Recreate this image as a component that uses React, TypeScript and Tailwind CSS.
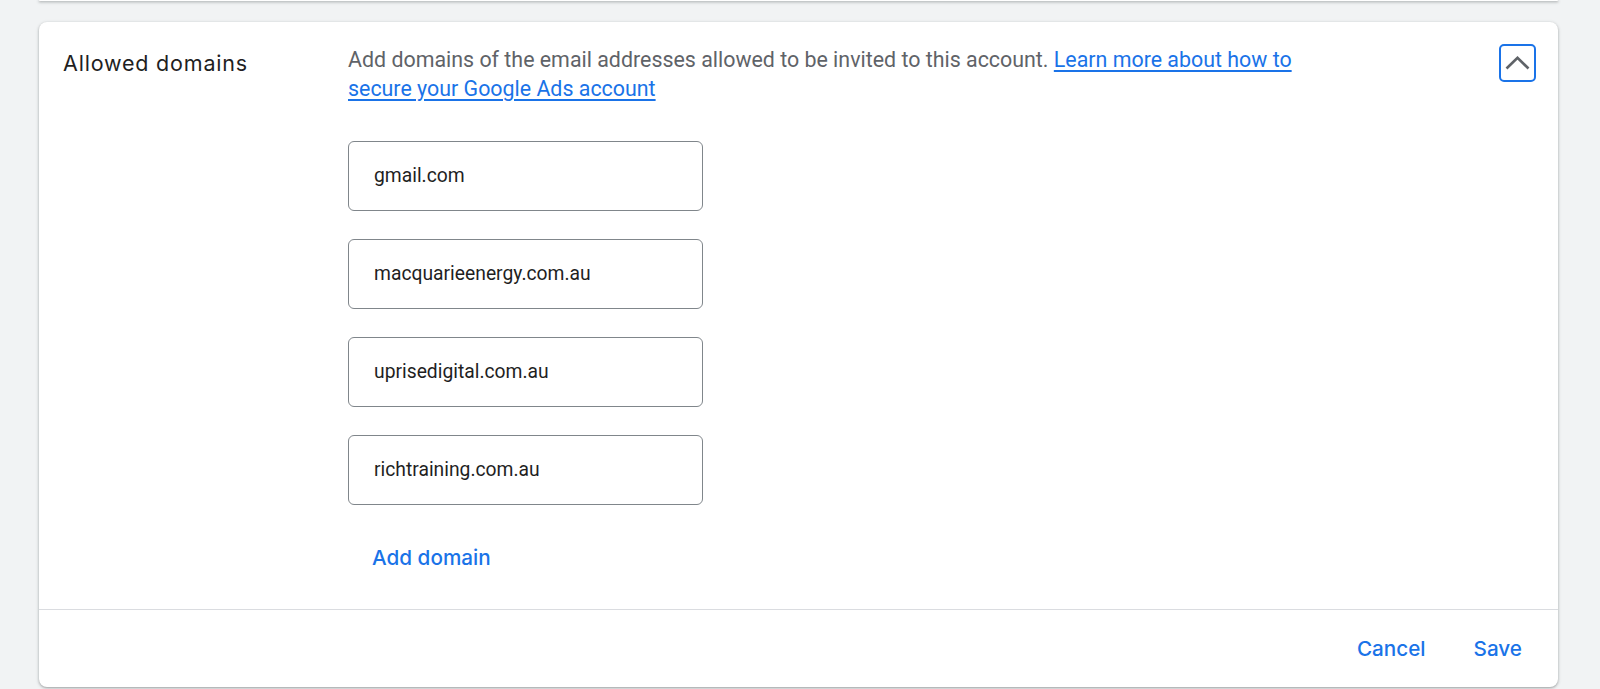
import React from "react";

const domains = [
  "gmail.com",
  "macquarieenergy.com.au",
  "uprisedigital.com.au",
  "richtraining.com.au",
];

const cardShadow =
  "shadow-[0_1px_2px_rgba(60,64,67,0.3),0_1px_3px_1px_rgba(60,64,67,0.15)]";

export default function App() {
  return (
    <div className="h-[689px] w-full overflow-hidden bg-[#f1f3f4] pl-[39px] pr-[42px] font-['Roboto',sans-serif]">
      <div className={`h-[1px] rounded-b-[8px] bg-white ${cardShadow}`} />
      <div className={`mt-[21px] rounded-[8px] bg-white ${cardShadow}`}>
        <div className="flex pl-[24px] pr-[22px] pt-[23px] pb-[33px]">
          <div className="mt-[4px] w-[285px] shrink-0 font-['Inter',sans-serif] text-[21.5px] font-normal leading-[29px] tracking-[0.8px] text-[#1f1f1f]">
            Allowed domains
          </div>
          <div className="flex-1">
            <p className="whitespace-nowrap text-[21.4px] leading-[29px] text-[#5f6368]">
              Add domains of the email addresses allowed to be invited to this account.{" "}
              <a href="#" className="text-[#1a73e8] underline underline-offset-[3px]">
                Learn more about how to
                <br />
                secure your Google Ads account
              </a>
            </p>
            <div className="mt-[38px] flex flex-col gap-[28px]">
              {domains.map((d) => (
                <div
                  key={d}
                  className="flex h-[70px] w-[355px] items-center rounded-[6px] border border-[#80868b] pl-[25px] text-[19.3px] text-[#1f1f1f]"
                >
                  {d}
                </div>
              ))}
            </div>
            <button className="mt-[35px] flex h-[36px] items-center pl-[24px] font-['Inter',sans-serif] text-[20.7px] font-medium text-[#1a73e8]">
              Add domain
            </button>
          </div>
          <div className="-mt-[1px] shrink-0">
            <button className="flex h-[38px] w-[37px] items-center justify-center rounded-[5px] border-2 border-[#1a73e8]">
              <svg width="25" height="14" viewBox="0 0 25 14" fill="none">
                <path d="M1.5 12.5 L12.5 1.8 L23.5 12.5" stroke="#5f6368" strokeWidth="2.6" />
              </svg>
            </button>
          </div>
        </div>
        <div className="h-[1px] bg-[#dadce0]" />
        <div className="flex h-[77px] items-center justify-end gap-[48px] pr-[36px] font-['Inter',sans-serif] text-[20.7px] font-medium text-[#1a73e8]">
          <span>Cancel</span>
          <span>Save</span>
        </div>
      </div>
    </div>
  );
}
